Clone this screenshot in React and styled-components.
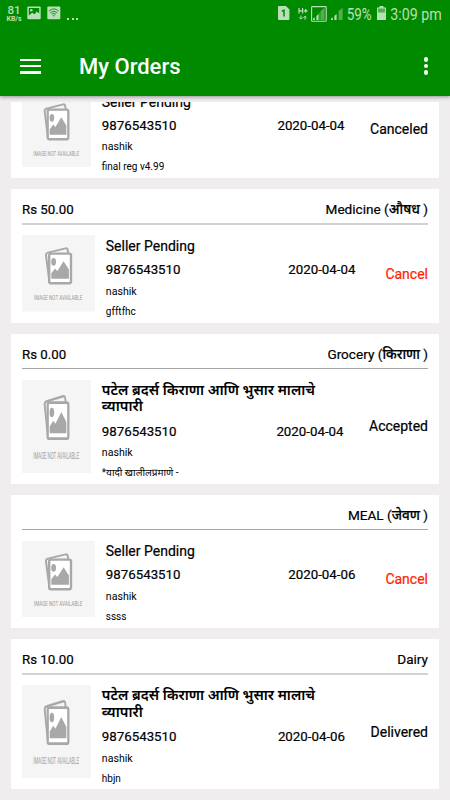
import styled, { createGlobalStyle } from "styled-components";

const orders = [
  {
    id: 1,
    price: "Rs 0.00",
    category: "Grocery",
    seller: "Seller Pending",
    phone: "9876543510",
    city: "nashik",
    note: "final reg v4.99",
    date: "2020-04-04",
    status: "Canceled",
    softLine: true,
  },
  {
    id: 2,
    price: "Rs 50.00",
    category: "Medicine",
    localName: "औषध",
    seller: "Seller Pending",
    phone: "9876543510",
    city: "nashik",
    note: "gfftfhc",
    date: "2020-04-04",
    status: "Cancel",
    softLine: true,
  },
  {
    id: 3,
    price: "Rs 0.00",
    category: "Grocery",
    localName: "किराणा",
    seller: "पटेल ब्रदर्स किराणा आणि भुसार मालाचे व्यापारी",
    phone: "9876543510",
    city: "nashik",
    note: "*यादी खालीलप्रमाणे -",
    date: "2020-04-04",
    status: "Accepted",
    tall: true,
  },
  {
    id: 4,
    price: "",
    category: "MEAL",
    localName: "जेवण",
    seller: "Seller Pending",
    phone: "9876543510",
    city: "nashik",
    note: "ssss",
    date: "2020-04-06",
    status: "Cancel",
  },
  {
    id: 5,
    price: "Rs 10.00",
    category: "Dairy",
    seller: "पटेल ब्रदर्स किराणा आणि भुसार मालाचे व्यापारी",
    phone: "9876543510",
    city: "nashik",
    note: "hbjn",
    date: "2020-04-06",
    status: "Delivered",
    tall: true,
    softLine: true,
  },
];

export default function App() {
  return (
    <>
      <GlobalStyle />
      <Screen>
        <Header>
          <StatusBar />
          <Toolbar>
            <MenuButton aria-label="menu">
              <span />
              <span />
              <span />
            </MenuButton>
            <Title>My Orders</Title>
            <MoreButton aria-label="more">
              <span />
              <span />
              <span />
            </MoreButton>
          </Toolbar>
        </Header>
        <OrderList>
          {orders.map((order, index) => (
            <OrderCard key={order.id} order={order} scrolled={index === 0} />
          ))}
        </OrderList>
      </Screen>
    </>
  );
}

function StatusBar() {
  return (
    <StatusRow>
      <Speed>
        <b>81</b>
        <small>KB/s</small>
      </Speed>
      <PictureIcon />
      <WifiIcon />
      <Dots>
        <span />
        <span />
        <span />
      </Dots>
      <Spacer />
      <SimIcon />
      <DataIcon />
      <SignalIcon framed />
      <SignalIcon />
      <StatusText $width={27} $squeeze={0.84}>
        <span>59%</span>
      </StatusText>
      <BatteryIcon />
      <StatusText $width={51} $squeeze={0.89}>
        <span>3:09 pm</span>
      </StatusText>
    </StatusRow>
  );
}

function OrderCard({ order, scrolled }) {
  const wide = order.status === "Cancel";
  return (
    <Card $tall={order.tall} $scrolled={scrolled}>
      <CardHeader $soft={order.softLine}>
        <span>{order.price}</span>
        <Category>
          {order.category}
          {order.localName && (
            <>
              {" ("}
              <LocalName>{order.localName}</LocalName>
              {" )"}
            </>
          )}
        </Category>
      </CardHeader>
      <CardBody $soft={order.softLine}>
        <Placeholder wide={wide} tall={order.tall} />
        <Info>
          <Seller $tall={order.tall}>{order.seller}</Seller>
          <PhoneRow>
            <span>{order.phone}</span>
            <span>{order.date}</span>
          </PhoneRow>
          <City>{order.city}</City>
          <Note>{order.note}</Note>
        </Info>
        <Status $wide={wide} $tall={order.tall}>
          {order.status}
        </Status>
      </CardBody>
    </Card>
  );
}

function Placeholder({ wide, tall }) {
  return (
    <Thumb
      $wide={wide}
      $tall={tall}
      viewBox="0 0 73 76.5"
      preserveAspectRatio="none"
    >
      <rect width="73" height="76.5" fill="#f5f5f5" />
      <g fill="none" stroke="#a8a8a8" strokeWidth="2" strokeLinejoin="round">
        <path d="M27.6 48 L24 20.5 Q23.7 18.2 25.8 17.6 L43.6 13.4 Q45.4 13 45.7 14.8 L46.2 18" />
        <rect x="27.2" y="18.6" width="21.8" height="29.6" rx="1.6" fill="#fff" strokeWidth="2.4" />
      </g>
      <ellipse cx="31.6" cy="26.8" rx="2.4" ry="3.9" fill="#a8a8a8" />
      <path d="M29.3 43.7 V38.2 L33 33.6 L35.4 36 L41.6 26.3 L46.9 34.5 V43.7 Z" fill="#a8a8a8" />
      <text
        x="12"
        y="65.4"
        fontSize="7.6"
        fill="#9a9a9a"
        textLength="48.4"
        lengthAdjust="spacingAndGlyphs"
      >
        IMAGE NOT AVAILABLE
      </text>
    </Thumb>
  );
}

function PictureIcon() {
  return (
    <svg width="14" height="14" viewBox="0 0 14 14">
      <rect x="0.3" y="0.5" width="13.4" height="12.8" rx="1" fill="#b9dfb9" />
      <path d="M1.8 2 H12.2 V7.6 L9.8 5.6 L7.6 8.2 L5.2 6.8 L1.8 9.4 Z" fill="#008a00" />
      <circle cx="4.3" cy="4.3" r="1.3" fill="#b9dfb9" />
    </svg>
  );
}

function WifiIcon() {
  return (
    <WifiSvg width="14" height="14" viewBox="0 0 14 14">
      <rect x="0.3" y="0.5" width="13" height="12.8" rx="1" fill="#b9dfb9" />
      <g fill="none" stroke="#1d921d" strokeWidth="1">
        <path d="M2 5 Q6.8 0.8 11.6 5" />
        <path d="M3.4 6.7 Q6.8 3.7 10.2 6.7" />
        <path d="M4.8 8.3 Q6.8 6.5 8.8 8.3" />
      </g>
      <path d="M5.8 9.4 Q6.8 8.6 7.8 9.4 L6.8 10.7 Z" fill="#1d921d" />
    </WifiSvg>
  );
}

function SimIcon() {
  return (
    <svg width="12" height="14" viewBox="0 0 12 14">
      <path d="M0 1 Q0 0 1 0 H8 L11.4 3.4 V13 Q11.4 14 10.4 14 H1 Q0 14 0 13 Z" fill="#b9dfb9" />
      <path d="M3.8 5.3 L6 4.2 V10.6" fill="none" stroke="#008a00" strokeWidth="1.5" />
    </svg>
  );
}

function DataIcon() {
  return (
    <DataSvg width="11" height="14" viewBox="0 0 11 14">
      <g fill="none" stroke="#b9dfb9" strokeWidth="1.2">
        <path d="M1 1 V6.5 M4.6 1 V6.5 M1 3.8 H4.6 M5.8 3.9 H9.6 M7.7 2 V5.8" />
        <path d="M3 8.5 V12 M1.4 10.6 L3 12.2 L4.6 10.6 M7 12.8 V9.2 M5.4 10.8 L7 9.2 L8.6 10.8" strokeWidth="1" />
      </g>
    </DataSvg>
  );
}

function SignalIcon({ framed }) {
  return (
    <SignalSvg width="16" height="16" viewBox="0 0 16 16">
      {framed && (
        <rect x="0.6" y="0.6" width="14.6" height="14.6" rx="0.8" fill="none" stroke="#b9dfb9" strokeWidth="1.1" />
      )}
      <path d="M9.6 5 L13.6 1.8 V14 H9.6 Z" fill="#53ad53" />
      <path d="M2 14 V12.6 L3.8 11.4 V14 Z M5.4 14 V10 L7.6 8 V14 Z" fill="#b9dfb9" />
      {framed && <path d="M8.4 14 V7 L9.4 6 V14 Z" fill="#53ad53" />}
    </SignalSvg>
  );
}

function BatteryIcon() {
  return (
    <BatterySvg width="9" height="14" viewBox="0 0 9 14">
      <path d="M2.5 0 H6.5 V1.4 H9 V14 H0 V1.4 H2.5 Z" fill="#b9dfb9" />
      <rect x="1" y="2.5" width="7" height="4" fill="#53ad53" />
    </BatterySvg>
  );
}

const GlobalStyle = createGlobalStyle`
  * {
    box-sizing: border-box;
  }

  body {
    margin: 0;
    background-color: #efedee;
    font-family: Roboto, "Noto Sans Devanagari", "Noto Sans", sans-serif;
    color: #000;
  }
`;

const Screen = styled.div`
  width: 450px;
  height: 800px;
  display: flex;
  flex-direction: column;
  overflow: hidden;
  background-color: #efedee;
`;

const Header = styled.header`
  position: relative;
  height: 96px;
  flex-shrink: 0;
  background-color: #008a00;
  box-shadow: 0 1px 4px rgba(0, 0, 0, 0.4);
`;

const StatusRow = styled.div`
  height: 30px;
  display: flex;
  align-items: flex-start;
  padding: 6px 8.5px 0 6px;
  color: #b9dfb9;

  svg {
    flex-shrink: 0;
  }
`;

const Speed = styled.div`
  width: 16px;
  margin: -2px 5px 0 0;
  display: flex;
  flex-direction: column;
  align-items: center;

  b {
    font-size: 11.5px;
    font-weight: 500;
    line-height: 12px;
  }

  small {
    font-size: 7px;
    font-weight: 700;
    line-height: 7px;
  }
`;

const Dots = styled.div`
  display: flex;
  gap: 2.6px;
  margin: 11.5px 0 0 6px;

  span {
    width: 2px;
    height: 2px;
    background-color: #b9dfb9;
  }
`;

const Spacer = styled.div`
  flex: 1;
`;

const WifiSvg = styled.svg`
  margin-left: 6px;
`;

const DataSvg = styled.svg`
  margin: 1px 0 0 8.5px;
`;

const SignalSvg = styled.svg`
  margin: -0.5px 0 0 2px;
`;

const BatterySvg = styled.svg`
  margin: 0 5px 0 4.5px;
`;

const StatusText = styled.span`
  width: ${({ $width }) => $width}px;
  display: flex;
  justify-content: flex-end;
  font-size: 16px;
  line-height: 18px;
  white-space: nowrap;

  span {
    transform: scaleX(${({ $squeeze }) => $squeeze});
    transform-origin: right;
  }
`;

const Toolbar = styled.div`
  height: 72px;
  display: flex;
  align-items: center;
  padding: 0 22px 0 20px;
`;

const MenuButton = styled.button`
  width: 21px;
  display: flex;
  flex-direction: column;
  gap: 3.75px;
  padding: 0;
  border: none;
  background: none;

  span {
    height: 2.5px;
    background-color: #fff;
  }
`;

const Title = styled.h1`
  flex: 1;
  margin: 0 0 0 38px;
  color: #fff;
  font-size: 22px;
  font-weight: 500;
`;

const MoreButton = styled.button`
  display: flex;
  flex-direction: column;
  gap: 2px;
  padding: 0;
  border: none;
  background: none;

  span {
    width: 4.5px;
    height: 4.5px;
    border-radius: 50%;
    background-color: #fff;
  }
`;

const OrderList = styled.main`
  flex: 1;
  display: flex;
  flex-direction: column;
  gap: 11px;
  margin: 6px 11px 0;
  overflow: hidden;
  -webkit-text-stroke: 0.2px;
`;

/* the first card is scrolled partly out of the list */
const Card = styled.article`
  flex-shrink: 0;
  height: ${({ $tall }) => ($tall ? 149.7 : 133.7)}px;
  margin-top: ${({ $scrolled }) => ($scrolled ? "-57.3px" : 0)};
  padding: 0 11px;
  background-color: #fff;
`;

const CardHeader = styled.div`
  height: ${({ $soft }) => ($soft ? 36 : 35)}px;
  display: flex;
  justify-content: space-between;
  padding-top: 11px;
  border-bottom: ${({ $soft }) =>
    $soft ? "2px solid #d2d2d2" : "1px solid #a5a5a5"};
  font-size: 13.3px;
  line-height: 19px;
`;

const Category = styled.span`
  font-size: 13.6px;
`;

const LocalName = styled.span`
  font-size: 13.6px;
  font-weight: 500;
`;

const CardBody = styled.div`
  display: flex;
  align-items: flex-start;
  padding-top: ${({ $soft }) => ($soft ? 10 : 10.8)}px;
`;

const Thumb = styled.svg`
  flex-shrink: 0;
  width: ${({ $wide }) => ($wide ? 73 : 69)}px;
  height: ${({ $tall }) => ($tall ? 93 : 76.5)}px;
  -webkit-text-stroke: 0;
`;

const Info = styled.div`
  flex: 1;
  margin: -1.2px 0 0 10.8px;
`;

const Seller = styled.p`
  margin: ${({ $tall }) => ($tall ? "4px 0 4px" : 0)};
  font-size: ${({ $tall }) => ($tall ? 14.5 : 14)}px;
  font-weight: ${({ $tall }) => ($tall ? 600 : 400)};
  line-height: ${({ $tall }) => ($tall ? 16.5 : 24)}px;
  -webkit-text-stroke: ${({ $tall }) => ($tall ? 0 : 0.2)}px;
`;

const PhoneRow = styled.div`
  display: flex;
  justify-content: space-between;
  font-size: 13.3px;
  line-height: 23.5px;
`;

const City = styled.p`
  margin: 0;
  font-size: 10.6px;
  line-height: 20px;
  -webkit-text-stroke: 0;
`;

const Note = styled(City)`
  font-size: 10px;
`;

const Status = styled.span`
  margin: ${({ $tall }) => ($tall ? 36.5 : 28.5)}px 0 0
    ${({ $wide }) => ($wide ? 30 : 25.5)}px;
  color: ${({ $wide }) => ($wide ? "#ff2200" : "#000")};
  font-size: 14px;
  line-height: 20px;
`;
